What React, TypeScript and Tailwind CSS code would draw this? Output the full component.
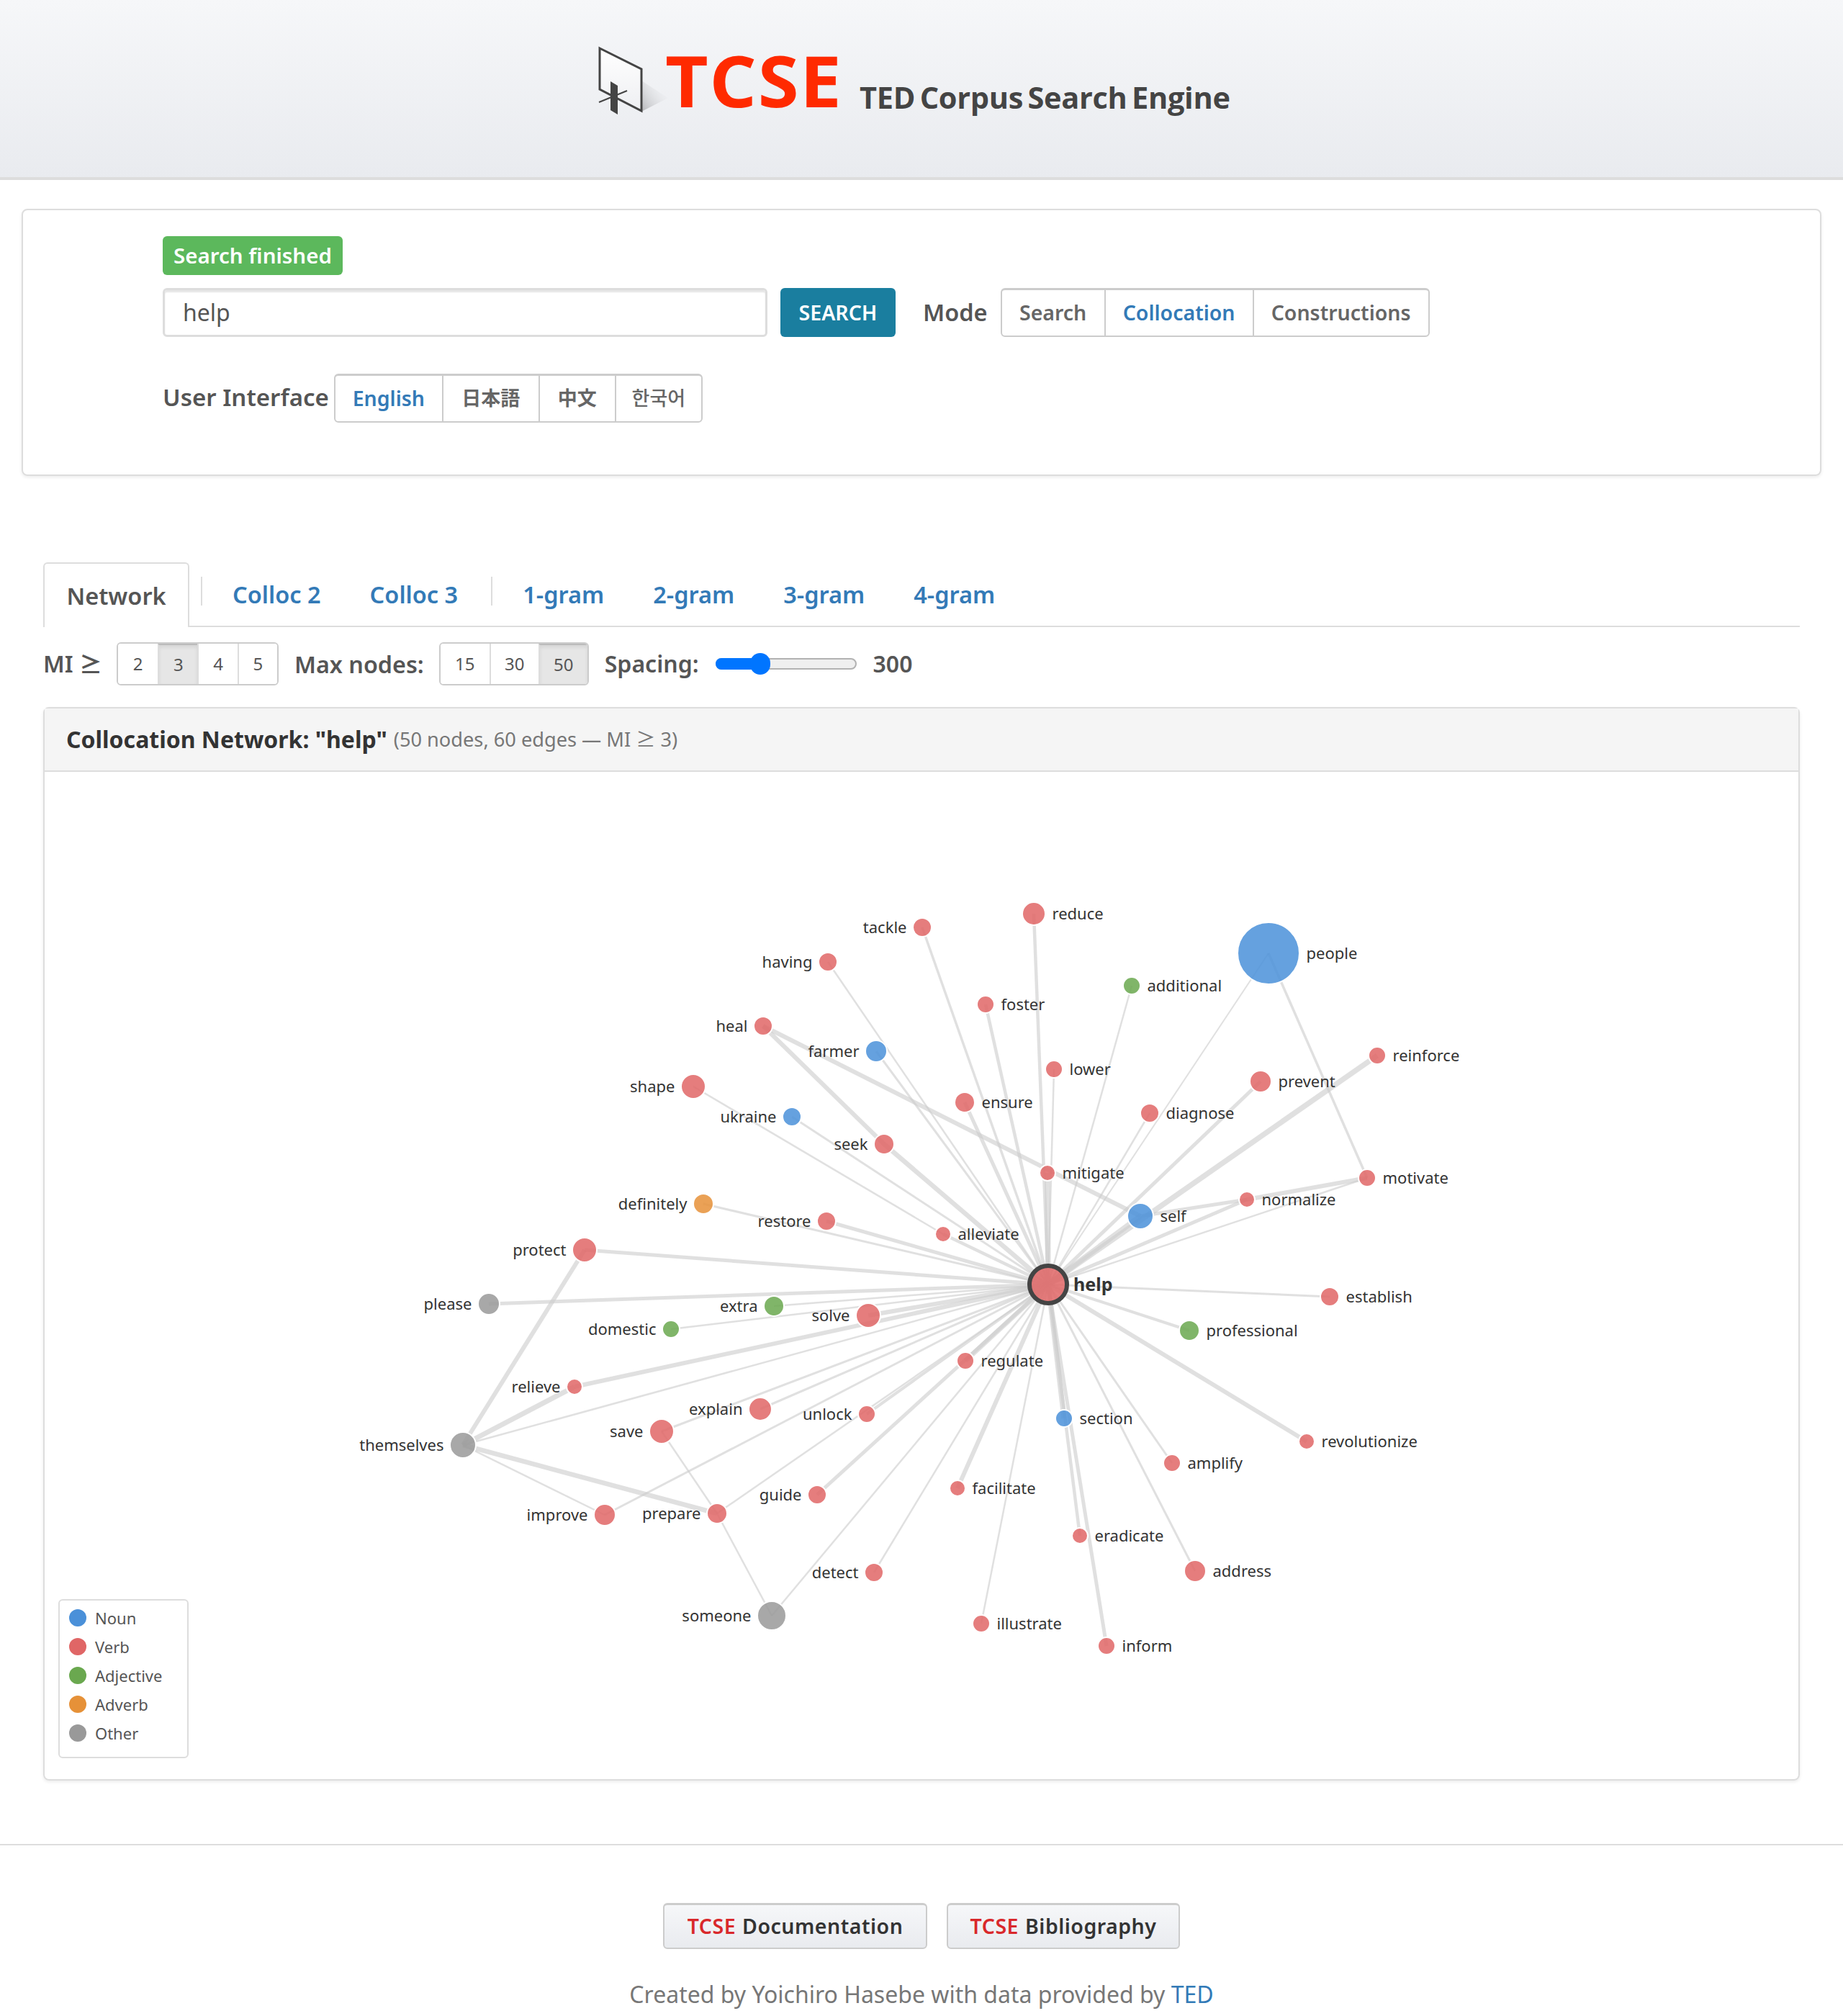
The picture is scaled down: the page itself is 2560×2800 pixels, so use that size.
import type { ReactNode } from 'react'

type Pos = 'n' | 'v' | 'a' | 'r' | 'o'
type Node = { id: string; x: number; y: number; r: number; pos: Pos; left?: boolean }

const fills: Record<Pos, string> = {
  n: '#4a90d9',
  v: '#e06666',
  a: '#6aa84f',
  r: '#e69138',
  o: '#999999',
}

const nodes: Node[] = [
  { id: 'tackle', x: 1281, y: 1288, r: 13, pos: 'v', left: true },
  { id: 'having', x: 1150, y: 1336, r: 13, pos: 'v', left: true },
  { id: 'foster', x: 1369, y: 1395, r: 12, pos: 'v' },
  { id: 'heal', x: 1060, y: 1425, r: 13, pos: 'v', left: true },
  { id: 'farmer', x: 1217, y: 1460, r: 15, pos: 'n', left: true },
  { id: 'shape', x: 963, y: 1509, r: 17, pos: 'v', left: true },
  { id: 'ukraine', x: 1100, y: 1551, r: 13, pos: 'n', left: true },
  { id: 'seek', x: 1228, y: 1589, r: 14, pos: 'v', left: true },
  { id: 'ensure', x: 1340, y: 1531, r: 14, pos: 'v' },
  { id: 'definitely', x: 977, y: 1672, r: 14, pos: 'r', left: true },
  { id: 'restore', x: 1148, y: 1696, r: 13, pos: 'v', left: true },
  { id: 'alleviate', x: 1310, y: 1714, r: 11, pos: 'v' },
  { id: 'protect', x: 812, y: 1736, r: 17, pos: 'v', left: true },
  { id: 'reduce', x: 1436, y: 1269, r: 16, pos: 'v' },
  { id: 'people', x: 1762, y: 1324, r: 43, pos: 'n' },
  { id: 'additional', x: 1572, y: 1369, r: 12, pos: 'a' },
  { id: 'lower', x: 1464, y: 1485, r: 12, pos: 'v' },
  { id: 'reinforce', x: 1913, y: 1466, r: 12, pos: 'v' },
  { id: 'prevent', x: 1751, y: 1502, r: 15, pos: 'v' },
  { id: 'diagnose', x: 1597, y: 1546, r: 13, pos: 'v' },
  { id: 'mitigate', x: 1455, y: 1629, r: 11, pos: 'v' },
  { id: 'motivate', x: 1899, y: 1636, r: 12, pos: 'v' },
  { id: 'normalize', x: 1732, y: 1666, r: 11, pos: 'v' },
  { id: 'self', x: 1584, y: 1689, r: 18, pos: 'n' },
  { id: 'establish', x: 1847, y: 1801, r: 13, pos: 'v' },
  { id: 'please', x: 679, y: 1811, r: 15, pos: 'o', left: true },
  { id: 'extra', x: 1075, y: 1814, r: 14, pos: 'a', left: true },
  { id: 'solve', x: 1206, y: 1827, r: 17, pos: 'v', left: true },
  { id: 'domestic', x: 932, y: 1846, r: 12, pos: 'a', left: true },
  { id: 'professional', x: 1652, y: 1848, r: 14, pos: 'a' },
  { id: 'regulate', x: 1341, y: 1890, r: 12, pos: 'v' },
  { id: 'relieve', x: 798, y: 1926, r: 11, pos: 'v', left: true },
  { id: 'explain', x: 1056, y: 1957, r: 16, pos: 'v', left: true },
  { id: 'unlock', x: 1204, y: 1964, r: 12, pos: 'v', left: true },
  { id: 'section', x: 1478, y: 1970, r: 12, pos: 'n' },
  { id: 'save', x: 919, y: 1988, r: 17, pos: 'v', left: true },
  { id: 'revolutionize', x: 1815, y: 2002, r: 11, pos: 'v' },
  { id: 'themselves', x: 643, y: 2007, r: 18, pos: 'o', left: true },
  { id: 'amplify', x: 1628, y: 2032, r: 12, pos: 'v' },
  { id: 'facilitate', x: 1330, y: 2067, r: 11, pos: 'v' },
  { id: 'guide', x: 1135, y: 2076, r: 13, pos: 'v', left: true },
  { id: 'prepare', x: 996, y: 2102, r: 14, pos: 'v', left: true },
  { id: 'improve', x: 840, y: 2104, r: 15, pos: 'v', left: true },
  { id: 'eradicate', x: 1500, y: 2133, r: 11, pos: 'v' },
  { id: 'address', x: 1660, y: 2182, r: 15, pos: 'v' },
  { id: 'detect', x: 1214, y: 2184, r: 13, pos: 'v', left: true },
  { id: 'someone', x: 1072, y: 2244, r: 20, pos: 'o', left: true },
  { id: 'illustrate', x: 1363, y: 2255, r: 12, pos: 'v' },
  { id: 'inform', x: 1537, y: 2286, r: 12, pos: 'v' },
]

// [from, to, width]; "help" is the hub
const edges: [string, string, number][] = [
  ['tackle', 'help', 3.5],
  ['having', 'help', 2.5],
  ['foster', 'help', 4.5],
  ['farmer', 'help', 3],
  ['heal', 'seek', 6],
  ['heal', 'self', 6],
  ['seek', 'help', 6.5],
  ['ensure', 'help', 5],
  ['shape', 'alleviate', 2.5],
  ['alleviate', 'help', 4.5],
  ['ukraine', 'help', 3],
  ['definitely', 'help', 3],
  ['restore', 'help', 5],
  ['protect', 'help', 5],
  ['protect', 'themselves', 6],
  ['reduce', 'help', 4.5],
  ['people', 'help', 2],
  ['people', 'motivate', 3.5],
  ['additional', 'help', 2.5],
  ['lower', 'help', 2.5],
  ['reinforce', 'help', 7.5],
  ['self', 'help', 7.5],
  ['prevent', 'help', 5],
  ['diagnose', 'help', 2.5],
  ['mitigate', 'help', 7.5],
  ['normalize', 'self', 5],
  ['normalize', 'help', 5],
  ['motivate', 'normalize', 6],
  ['motivate', 'help', 2.5],
  ['establish', 'help', 3],
  ['please', 'help', 5],
  ['extra', 'help', 2.5],
  ['domestic', 'help', 2.5],
  ['solve', 'help', 6],
  ['relieve', 'help', 6],
  ['relieve', 'themselves', 7],
  ['themselves', 'help', 2.5],
  ['professional', 'help', 4],
  ['explain', 'help', 3],
  ['save', 'help', 3],
  ['unlock', 'help', 4],
  ['prepare', 'help', 2.5],
  ['improve', 'help', 3],
  ['themselves', 'improve', 2.5],
  ['themselves', 'prepare', 6.5],
  ['save', 'prepare', 2.5],
  ['prepare', 'someone', 2.5],
  ['someone', 'help', 2.5],
  ['detect', 'help', 2.5],
  ['guide', 'help', 5],
  ['regulate', 'help', 6.5],
  ['facilitate', 'help', 6],
  ['illustrate', 'help', 2.5],
  ['section', 'help', 7],
  ['eradicate', 'help', 4.5],
  ['inform', 'help', 5],
  ['address', 'help', 3],
  ['amplify', 'help', 3],
  ['revolutionize', 'help', 6],
]

const hub = { x: 1456, y: 1784 }

function point(id: string) {
  if (id === 'help') return hub
  return nodes.find((n) => n.id === id) ?? hub
}

function Network() {
  return (
    <svg viewBox="62 1072 2436 1399" className="block h-[1399px] w-[2436px]">
      {edges.map(([a, b, w]) => {
        const p = point(a)
        const q = point(b)
        return <line key={a + b} x1={p.x} y1={p.y} x2={q.x} y2={q.y} stroke="#cccccc" strokeOpacity={0.6} strokeWidth={w} />
      })}
      {nodes.map((n) => (
        <g key={n.id}>
          <circle cx={n.x} cy={n.y} r={n.r} fill={fills[n.pos]} fillOpacity={0.85} stroke="#ffffff" strokeWidth={2} />
          <text
            x={n.left ? n.x - n.r - 8.5 : n.x + n.r + 9.5}
            y={n.y - 1}
            textAnchor={n.left ? 'end' : 'start'}
            dominantBaseline="central"
            className="fill-[#333333] text-[22px]"
          >
            {n.id}
          </text>
        </g>
      ))}
      <circle cx={hub.x} cy={hub.y} r={26} fill={fills.v} fillOpacity={0.85} stroke="#444444" strokeWidth={6} />
      <text x={hub.x + 35} y={hub.y - 1} dominantBaseline="central" className="fill-[#333333] text-[25px] font-bold">
        help
      </text>
    </svg>
  )
}

function Logo() {
  return (
    <svg width="100" height="100" viewBox="830 62 100 100" className="shrink-0">
      <defs>
        <linearGradient id="panel" x1="0" y1="0" x2="0" y2="1">
          <stop offset="0" stopColor="#ffffff" />
          <stop offset="1" stopColor="#eeeff2" />
        </linearGradient>
        <linearGradient id="shade" x1="0" y1="1" x2="1" y2="0.2">
          <stop offset="0" stopColor="#b4b5b8" />
          <stop offset="1" stopColor="#eeeff2" stopOpacity="0" />
        </linearGradient>
      </defs>
      <polygon points="891,112 928,136 891,155" fill="url(#shade)" />
      <polygon points="833,67 891,96 891,154 833,124" fill="url(#panel)" stroke="#444444" strokeWidth="3" />
      <line x1="832" y1="142" x2="871" y2="126" stroke="#444444" strokeWidth="2" />
      <polygon points="848,113 858,119 858,159 848,153" fill="#444444" />
    </svg>
  )
}

type Cell = { label: string; width: number; active?: boolean; extra?: string }

function Segment({ cells }: { cells: Cell[] }) {
  return (
    <div className="flex h-[68px] rounded-md border-2 border-t-[3px] border-[#cccccc] bg-white text-[28.5px] font-semibold text-[#666666]">
      {cells.map((cell) => (
        <span
          key={cell.label}
          style={{ width: cell.width }}
          className={`flex items-center justify-center border-l-2 border-[#cccccc] first:border-l-0 ${cell.active ? 'text-[#337ab7]' : ''} ${cell.extra ?? ''}`}
        >
          {cell.label}
        </span>
      ))}
    </div>
  )
}

function Picker({ items, active, cell }: { items: string[]; active: string; cell: string }) {
  return (
    <div className="flex h-[60px] overflow-hidden rounded-md border-2 border-[#cccccc] text-[24px] text-[#555555]">
      {items.map((item) => (
        <span
          key={item}
          className={`flex items-center justify-center border-l-2 border-[#dddddd] first:border-l-0 ${cell} ${
            item === active ? 'border-t-2 border-t-[#bbbbbb] bg-[#e6e6e6] shadow-[inset_0_3px_5px_rgba(0,0,0,0.08)]' : 'bg-white'
          }`}
        >
          {item}
        </span>
      ))}
    </div>
  )
}

function Tab({ children, className }: { children: ReactNode; className?: string }) {
  return <a className={`flex items-center pt-[2px] text-[32.5px] font-semibold text-[#337ab7] ${className ?? ''}`}>{children}</a>
}

function FooterButton({ label, className }: { label: string; className: string }) {
  return (
    <a className={`flex h-[64px] items-center justify-center rounded-md border-2 border-t-[3px] border-[#cccccc] bg-gradient-to-b from-[#f6f7f9] to-[#e9ebef] text-[28.5px] font-semibold tracking-[0.5px] text-[#333333] ${className}`}>
      <span className="mr-[9px] text-[#d9282b]">TCSE</span>
      {label}
    </a>
  )
}

const legend: [string, Pos][] = [
  ['Noun', 'n'],
  ['Verb', 'v'],
  ['Adjective', 'a'],
  ['Adverb', 'r'],
  ['Other', 'o'],
]

export default function App() {
  return (
    <div className="h-[2800px] w-[2560px] overflow-hidden bg-white font-['Noto_Sans','Noto_Sans_CJK_JP',sans-serif] text-[#555555]">
      <header className="flex h-[250px] items-start border-b-4 border-[#dddddd] bg-gradient-to-b from-[#f6f7f9] to-[#e9ebef] pl-[830px] pt-[62px]">
        <Logo />
        <span className="ml-[-6px] mt-[-17px] inline-block origin-left scale-x-[1.053] font-['Open_Sans',sans-serif] text-[98px] font-bold leading-[133px] tracking-[1.5px] text-[#ff2a00]">TCSE</span>
        <span className="ml-[36px] mt-[46px] font-['Open_Sans',sans-serif] text-[41.5px] font-bold leading-[54px] tracking-[-0.3px] text-[#444444] [word-spacing:-4px]">TED Corpus Search Engine</span>
      </header>

      <section className="mx-[30px] mt-[40px] h-[371px] rounded-lg border-2 border-[#dddddd] pl-[194px] pt-[36px] shadow-[0_2px_4px_rgba(0,0,0,0.08)]">
        <div className="flex h-[54px] w-[250px] items-center justify-center rounded-md bg-[#5cb85c] text-[29.5px] font-semibold text-white">Search finished</div>
        <div className="mt-[18px] flex items-center">
          <div className="flex h-[68px] w-[840px] items-center rounded-md border-[3px] border-[#dddddd] pl-[25px] text-[32px] text-[#555555] shadow-[inset_0_3px_2px_rgba(0,0,0,0.1)]">help</div>
          <button className="ml-[18px] h-[68px] w-[160px] rounded-md bg-[#1a7e9f] text-[28.5px] font-semibold text-white">SEARCH</button>
          <span className="ml-[38px] mr-[18px] text-[32.5px] font-semibold">Mode</span>
          <Segment
            cells={[
              { label: 'Search', width: 142 },
              { label: 'Collocation', width: 206, active: true },
              { label: 'Constructions', width: 244 },
            ]}
          />
        </div>
        <div className="mt-[51px] flex items-center">
          <span className="mr-[7px] mt-[-2px] text-[33px] font-semibold">User Interface</span>
          <Segment
            cells={[
              { label: 'English', width: 148, active: true },
              { label: '日本語', width: 134, extra: 'text-[27px]' },
              { label: '中文', width: 106, extra: 'text-[27px]' },
              { label: '한국어', width: 120, extra: 'text-[27px] font-medium' },
            ]}
          />
        </div>
      </section>

      <main className="mx-[60px] mt-[120px]">
        <nav className="flex h-[90px] border-b-2 border-[#dddddd]">
          <div className="mb-[-2px] flex h-[90px] w-[203px] items-center justify-center rounded-t-md border-2 border-b-0 border-[#dddddd] bg-white pt-[2px] text-[32.5px] font-semibold text-[#555555]">Network</div>
          <span className="ml-[16px] mt-[20px] h-[40px] w-[2px] bg-[#dddddd]" />
          <Tab className="ml-[42px]">Colloc 2</Tab>
          <Tab className="ml-[68px]">Colloc 3</Tab>
          <span className="ml-[46px] mt-[20px] h-[40px] w-[2px] bg-[#dddddd]" />
          <Tab className="ml-[42px]">1-gram</Tab>
          <Tab className="ml-[68px]">2-gram</Tab>
          <Tab className="ml-[68px]">3-gram</Tab>
          <Tab className="ml-[68px]">4-gram</Tab>
        </nav>

        <div className="mt-[21px] flex h-[60px] items-center text-[32px] font-semibold">
          <span className="mr-[20px]">MI ≥</span>
          <div className="font-normal">
            <Picker items={['2', '3', '4', '5']} active="3" cell="w-[55.25px]" />
          </div>
          <span className="ml-[22px] mr-[21px] text-[32.3px]">Max nodes:</span>
          <div className="font-normal">
            <Picker items={['15', '30', '50']} active="50" cell="w-[68px]" />
          </div>
          <span className="ml-[22px] mr-[23px]">Spacing:</span>
          <div className="relative h-[16px] w-[196px] rounded-full border-2 border-[#b2b2b2] bg-[#efefef]">
            <div className="absolute left-[-2px] top-[-2px] h-[16px] w-[62px] rounded-l-full bg-[#0075ff]" />
            <div className="absolute left-[46px] top-[-9px] h-[30px] w-[28px] rounded-full bg-[#0075ff]" />
          </div>
          <span className="ml-[23px]">300</span>
        </div>

        <section className="mt-[30px] h-[1491px] rounded-lg border-2 border-[#dddddd] shadow-[0_2px_4px_rgba(0,0,0,0.08)]">
          <div className="flex h-[88px] items-center border-b-2 border-[#dddddd] bg-[#f5f5f5] pl-[30px]">
            <strong className="text-[32px] font-bold text-[#333333]">Collocation Network: "help"</strong>
            <span className="ml-[9px] text-[27.2px] text-[#777777]">(50 nodes, 60 edges — MI ≥ 3)</span>
          </div>
          <div className="relative">
            <Network />
            <div className="absolute bottom-[29px] left-[19px] h-[221px] w-[181px] rounded-md border-2 border-[#dddddd] bg-white pl-[13px] pt-[4px]">
              {legend.map(([name, pos]) => (
                <div key={name} className="flex h-[40px] items-center text-[22px] text-[#555555]">
                  <svg width="24" height="24" className="mr-[12px] shrink-0">
                    <circle cx="12" cy="12" r="12" fill={fills[pos]} />
                  </svg>
                  {name}
                </div>
              ))}
            </div>
          </div>
        </section>
      </main>

      <footer className="mt-[88px] border-t-2 border-[#dddddd] pt-[80px]">
        <div className="flex justify-center gap-[27px]">
          <FooterButton label="Documentation" className="w-[367px]" />
          <FooterButton label="Bibliography" className="w-[324px]" />
        </div>
        <p className="mt-[39px] text-center text-[32px] text-[#777777]">
          Created by Yoichiro Hasebe with data provided by <a className="text-[#337ab7]">TED</a>
        </p>
      </footer>
    </div>
  )
}
